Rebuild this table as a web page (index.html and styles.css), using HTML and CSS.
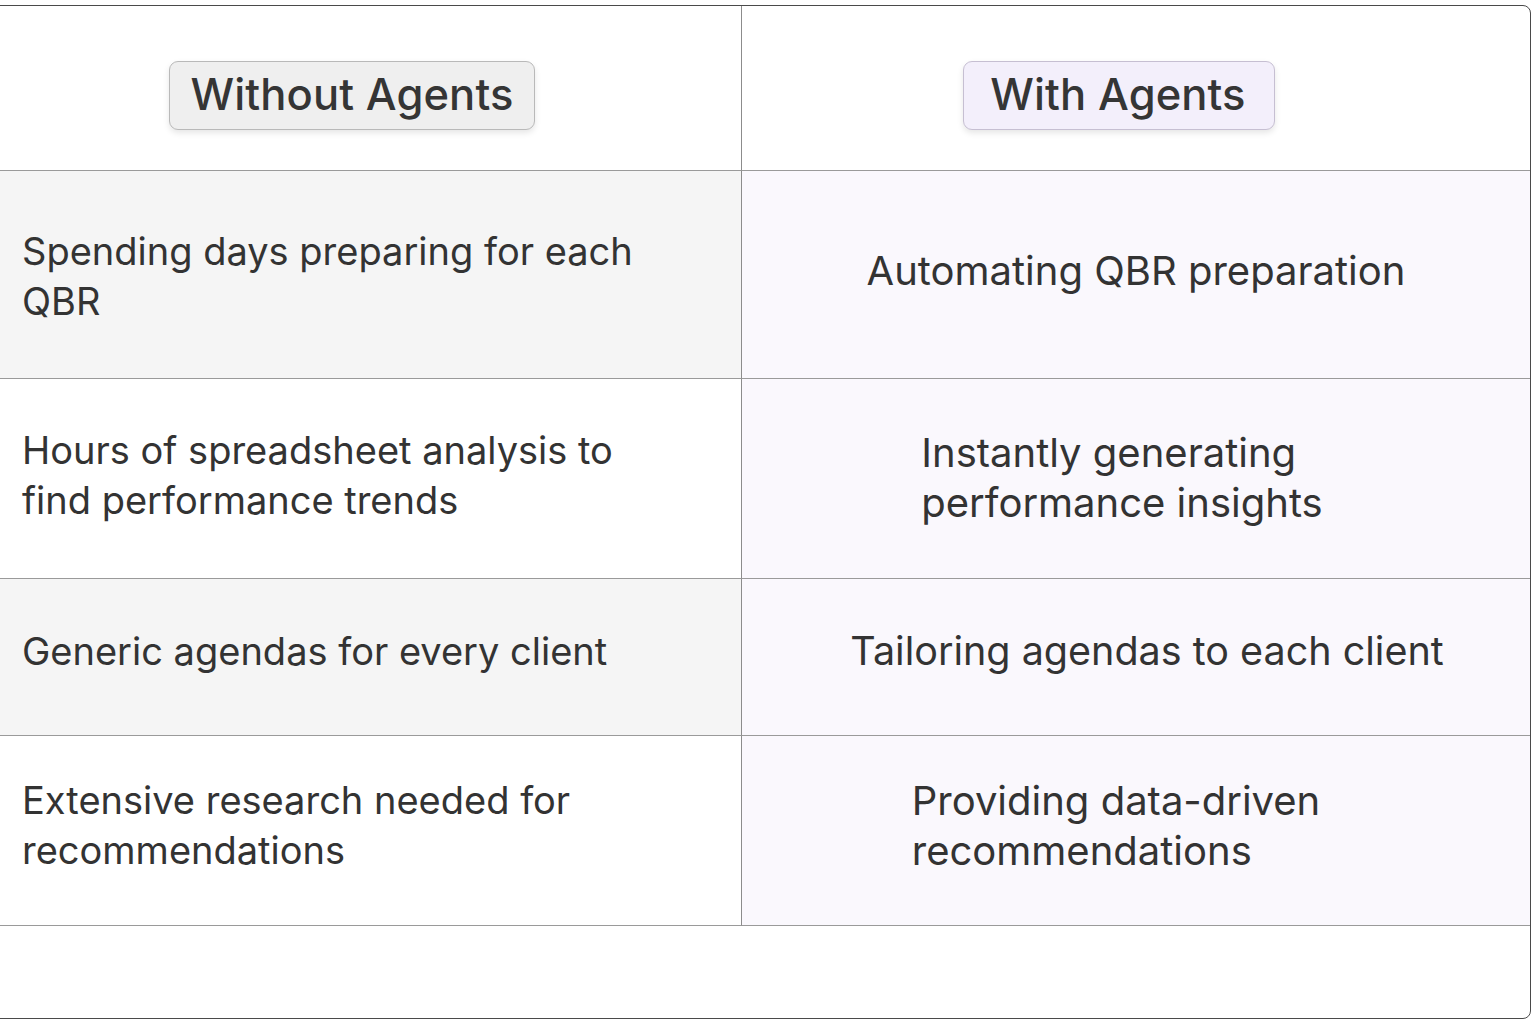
FILE: index.html
```html
<!DOCTYPE html>
<html lang="en">
<head>
<meta charset="utf-8">
<title>Without Agents vs With Agents</title>
<link rel="stylesheet" href="styles.css">
</head>
<body>
<div class="table">
  <div class="cell head left-col"><span class="pill pill-gray">Without Agents</span></div>
  <div class="cell head right-col"><span class="pill pill-purple">With Agents</span></div>

  <div class="cell body left-col shade r1">Spending days preparing for each<br>QBR</div>
  <div class="cell body right-col tint r1"><div class="inner up5">Automating QBR preparation</div></div>

  <div class="cell body left-col lift r2">Hours of spreadsheet analysis to<br>find performance trends</div>
  <div class="cell body right-col tint r2"><div class="inner shift-l up2">Instantly generating<br>performance insights</div></div>

  <div class="cell body left-col shade lift-more r3">Generic agendas for every client</div>
  <div class="cell body right-col tint r3"><div class="inner shift-r up6">Tailoring agendas to each client</div></div>

  <div class="cell body left-col lift-more r4">Extensive research needed for<br>recommendations</div>
  <div class="cell body right-col tint r4"><div class="inner shift-l2 up3">Providing data-driven<br>recommendations</div></div>

  <div class="cell foot"></div>
</div>
</body>
</html>
```

FILE: styles.css
```css
html, body {
  margin: 0;
  padding: 0;
  background: #ffffff;
}

body {
  font-family: Inter, "Noto Sans", "Liberation Sans", sans-serif;
  color: #333333;
  overflow: hidden;
}

.table {
  margin: 5px 0 0 -4px;
  width: 1535px;
  height: 1014px;
  box-sizing: border-box;
  border: 1.5px solid #4a4a4a;
  border-radius: 0 8px 8px 0;
  display: grid;
  grid-template-columns: 745px 1fr;
  grid-template-rows: 165px 208px 200px 157px 190px 1fr;
  overflow: hidden;
}

.cell {
  display: flex;
  align-items: center;
  box-sizing: border-box;
  border-bottom: 1.5px solid #9a9a9a;
}

.left-col {
  border-right: 1.5px solid #8c8c8c;
}

.head {
  justify-content: center;
  padding-top: 15px;
}

.head.left-col {
  padding-left: 0;
  padding-right: 34px;
}

.head.right-col {
  padding-left: 2px;
  padding-right: 36px;
}

.pill {
  display: inline-block;
  font-size: 43.5px;
  font-weight: 500;
  line-height: 1;
  letter-spacing: 0.1px;
  color: #353535;
  padding: 11px 21px 13px 21px;
  border-radius: 9px;
  box-shadow: 0 3px 6px rgba(0, 0, 0, 0.10);
}

.pill-gray {
  background: #efefef;
  border: 1px solid #b9b9b9;
}

.pill-purple {
  background: #f3effb;
  border: 1px solid #c6bfd2;
  padding-left: 26px;
  padding-right: 28px;
}

.body {
  font-size: 38px;
  line-height: 50px;
  font-weight: 400;
  color: #333333;
}

.body.left-col {
  padding-left: 25px;
  padding-right: 20px;
}

.body.left-col.lift {
  padding-bottom: 8px;
}

.body.left-col.lift-more {
  padding-bottom: 12px;
}

.shade {
  background: #f5f5f5;
}

.tint {
  background: #faf8fd;
  justify-content: center;
  font-size: 40px;
}

.inner {
  text-align: left;
}

.shift-l {
  margin-right: 28px;
}

.shift-r {
  margin-left: 22px;
  font-size: 39.5px;
}

.shift-l2 {
  margin-right: 40px;
}

.up5 { margin-bottom: 10px; }
.up2 { margin-bottom: 2px; }
.up3 { margin-bottom: 6px; }
.up6 { margin-bottom: 12px; }

.r1 { padding-top: 2px; }
.r4 { padding-bottom: 4px; }

.foot {
  grid-column: 1 / 3;
  border-bottom: none;
}
```
